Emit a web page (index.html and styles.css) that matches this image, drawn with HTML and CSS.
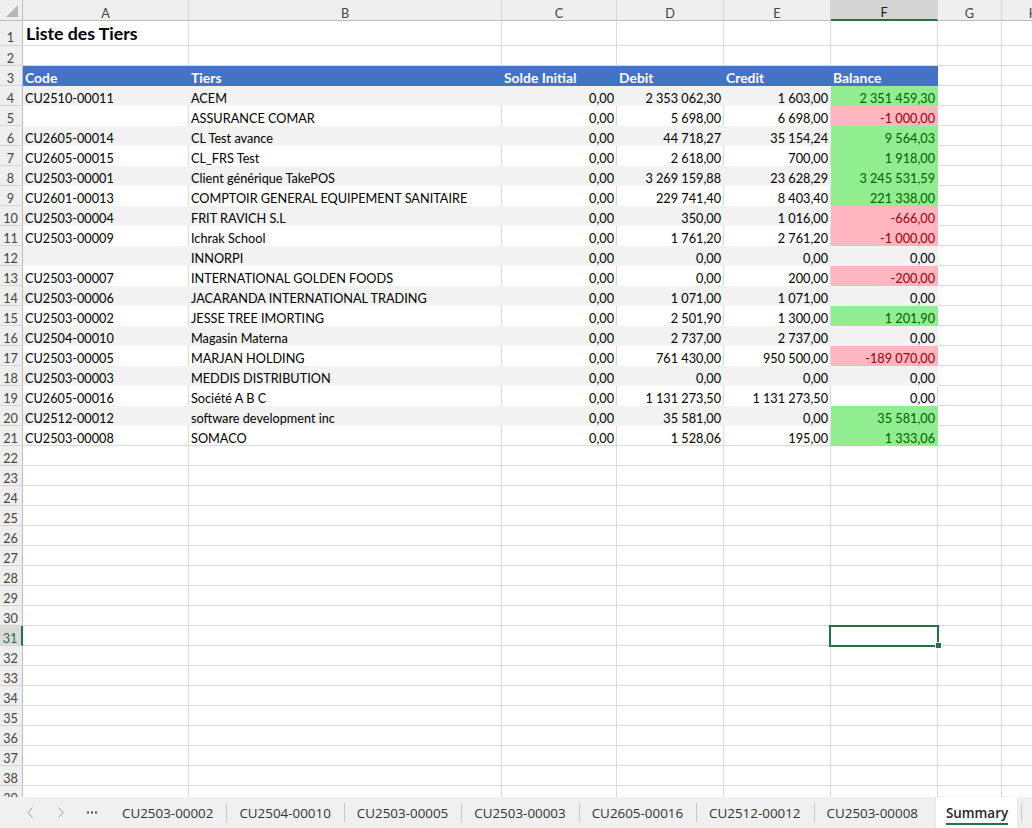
FILE: index.html
```html
<!DOCTYPE html>
<html lang="fr">
<head>
<meta charset="utf-8">
<title>Summary</title>
<link rel="stylesheet" href="styles.css">
</head>
<body>
<div class="app">
  <div class="sheet">
    <div class="row colhdr"><div class="corner"><span></span></div><div>A</div><div>B</div><div>C</div><div>D</div><div>E</div><div class="sel">F</div><div>G</div><div>H</div></div>
    <div class="row r1"><div class="rh">1</div><div class="title">Liste des Tiers</div><div></div><div></div><div></div><div></div><div></div><div></div><div></div></div>
    <div class="row"><div class="rh">2</div><div></div><div></div><div></div><div></div><div></div><div></div><div></div><div></div></div>
    <div class="row hd"><div class="rh">3</div><div class="d">Code</div><div class="d">Tiers</div><div class="d">Solde Initial</div><div class="d">Debit</div><div class="d">Credit</div><div class="d">Balance</div><div></div><div></div></div>
    <div class="row g"><div class="rh">4</div><div class="d">CU2510-00011</div><div class="d">ACEM</div><div class="d n">0,00</div><div class="d n">2&nbsp;353&nbsp;062,30</div><div class="d n">1&nbsp;603,00</div><div class="d n pos">2&nbsp;351&nbsp;459,30</div><div></div><div></div></div>
    <div class="row w"><div class="rh">5</div><div class="d"></div><div class="d">ASSURANCE COMAR</div><div class="d n">0,00</div><div class="d n">5&nbsp;698,00</div><div class="d n">6&nbsp;698,00</div><div class="d n neg">-1&nbsp;000,00</div><div></div><div></div></div>
    <div class="row g"><div class="rh">6</div><div class="d">CU2605-00014</div><div class="d">CL Test avance</div><div class="d n">0,00</div><div class="d n">44&nbsp;718,27</div><div class="d n">35&nbsp;154,24</div><div class="d n pos">9&nbsp;564,03</div><div></div><div></div></div>
    <div class="row w"><div class="rh">7</div><div class="d">CU2605-00015</div><div class="d">CL_FRS Test</div><div class="d n">0,00</div><div class="d n">2&nbsp;618,00</div><div class="d n">700,00</div><div class="d n pos">1&nbsp;918,00</div><div></div><div></div></div>
    <div class="row g"><div class="rh">8</div><div class="d">CU2503-00001</div><div class="d">Client générique TakePOS</div><div class="d n">0,00</div><div class="d n">3&nbsp;269&nbsp;159,88</div><div class="d n">23&nbsp;628,29</div><div class="d n pos">3&nbsp;245&nbsp;531,59</div><div></div><div></div></div>
    <div class="row w"><div class="rh">9</div><div class="d">CU2601-00013</div><div class="d">COMPTOIR GENERAL EQUIPEMENT SANITAIRE</div><div class="d n">0,00</div><div class="d n">229&nbsp;741,40</div><div class="d n">8&nbsp;403,40</div><div class="d n pos">221&nbsp;338,00</div><div></div><div></div></div>
    <div class="row g"><div class="rh">10</div><div class="d">CU2503-00004</div><div class="d">FRIT RAVICH S.L</div><div class="d n">0,00</div><div class="d n">350,00</div><div class="d n">1&nbsp;016,00</div><div class="d n neg">-666,00</div><div></div><div></div></div>
    <div class="row w"><div class="rh">11</div><div class="d">CU2503-00009</div><div class="d">Ichrak School</div><div class="d n">0,00</div><div class="d n">1&nbsp;761,20</div><div class="d n">2&nbsp;761,20</div><div class="d n neg">-1&nbsp;000,00</div><div></div><div></div></div>
    <div class="row g"><div class="rh">12</div><div class="d"></div><div class="d">INNORPI</div><div class="d n">0,00</div><div class="d n">0,00</div><div class="d n">0,00</div><div class="d n">0,00</div><div></div><div></div></div>
    <div class="row w"><div class="rh">13</div><div class="d">CU2503-00007</div><div class="d">INTERNATIONAL GOLDEN FOODS</div><div class="d n">0,00</div><div class="d n">0,00</div><div class="d n">200,00</div><div class="d n neg">-200,00</div><div></div><div></div></div>
    <div class="row g"><div class="rh">14</div><div class="d">CU2503-00006</div><div class="d">JACARANDA INTERNATIONAL TRADING</div><div class="d n">0,00</div><div class="d n">1&nbsp;071,00</div><div class="d n">1&nbsp;071,00</div><div class="d n">0,00</div><div></div><div></div></div>
    <div class="row w"><div class="rh">15</div><div class="d">CU2503-00002</div><div class="d">JESSE TREE IMORTING</div><div class="d n">0,00</div><div class="d n">2&nbsp;501,90</div><div class="d n">1&nbsp;300,00</div><div class="d n pos">1&nbsp;201,90</div><div></div><div></div></div>
    <div class="row g"><div class="rh">16</div><div class="d">CU2504-00010</div><div class="d">Magasin Materna</div><div class="d n">0,00</div><div class="d n">2&nbsp;737,00</div><div class="d n">2&nbsp;737,00</div><div class="d n">0,00</div><div></div><div></div></div>
    <div class="row w"><div class="rh">17</div><div class="d">CU2503-00005</div><div class="d">MARJAN HOLDING</div><div class="d n">0,00</div><div class="d n">761&nbsp;430,00</div><div class="d n">950&nbsp;500,00</div><div class="d n neg">-189&nbsp;070,00</div><div></div><div></div></div>
    <div class="row g"><div class="rh">18</div><div class="d">CU2503-00003</div><div class="d">MEDDIS DISTRIBUTION</div><div class="d n">0,00</div><div class="d n">0,00</div><div class="d n">0,00</div><div class="d n">0,00</div><div></div><div></div></div>
    <div class="row w"><div class="rh">19</div><div class="d">CU2605-00016</div><div class="d">Société A B C</div><div class="d n">0,00</div><div class="d n">1&nbsp;131&nbsp;273,50</div><div class="d n">1&nbsp;131&nbsp;273,50</div><div class="d n">0,00</div><div></div><div></div></div>
    <div class="row g"><div class="rh">20</div><div class="d">CU2512-00012</div><div class="d">software development inc</div><div class="d n">0,00</div><div class="d n">35&nbsp;581,00</div><div class="d n">0,00</div><div class="d n pos">35&nbsp;581,00</div><div></div><div></div></div>
    <div class="row w last"><div class="rh">21</div><div class="d">CU2503-00008</div><div class="d">SOMACO</div><div class="d n">0,00</div><div class="d n">1&nbsp;528,06</div><div class="d n">195,00</div><div class="d n pos">1&nbsp;333,06</div><div></div><div></div></div>
    <div class="row"><div class="rh">22</div><div></div><div></div><div></div><div></div><div></div><div></div><div></div><div></div></div>
    <div class="row"><div class="rh">23</div><div></div><div></div><div></div><div></div><div></div><div></div><div></div><div></div></div>
    <div class="row"><div class="rh">24</div><div></div><div></div><div></div><div></div><div></div><div></div><div></div><div></div></div>
    <div class="row"><div class="rh">25</div><div></div><div></div><div></div><div></div><div></div><div></div><div></div><div></div></div>
    <div class="row"><div class="rh">26</div><div></div><div></div><div></div><div></div><div></div><div></div><div></div><div></div></div>
    <div class="row"><div class="rh">27</div><div></div><div></div><div></div><div></div><div></div><div></div><div></div><div></div></div>
    <div class="row"><div class="rh">28</div><div></div><div></div><div></div><div></div><div></div><div></div><div></div><div></div></div>
    <div class="row"><div class="rh">29</div><div></div><div></div><div></div><div></div><div></div><div></div><div></div><div></div></div>
    <div class="row"><div class="rh">30</div><div></div><div></div><div></div><div></div><div></div><div></div><div></div><div></div></div>
    <div class="row"><div class="rh sel">31</div><div></div><div></div><div></div><div></div><div></div><div class="cur"></div><div></div><div></div></div>
    <div class="row"><div class="rh">32</div><div></div><div></div><div></div><div></div><div></div><div></div><div></div><div></div></div>
    <div class="row"><div class="rh">33</div><div></div><div></div><div></div><div></div><div></div><div></div><div></div><div></div></div>
    <div class="row"><div class="rh">34</div><div></div><div></div><div></div><div></div><div></div><div></div><div></div><div></div></div>
    <div class="row"><div class="rh">35</div><div></div><div></div><div></div><div></div><div></div><div></div><div></div><div></div></div>
    <div class="row"><div class="rh">36</div><div></div><div></div><div></div><div></div><div></div><div></div><div></div><div></div></div>
    <div class="row"><div class="rh">37</div><div></div><div></div><div></div><div></div><div></div><div></div><div></div><div></div></div>
    <div class="row"><div class="rh">38</div><div></div><div></div><div></div><div></div><div></div><div></div><div></div><div></div></div>
    <div class="row"><div class="rh">39</div><div></div><div></div><div></div><div></div><div></div><div></div><div></div><div></div></div>
  </div>
  <div class="tabs">
    <div class="nav">
      <span class="btn"><svg width="6" height="11" viewBox="0 0 6 11"><path d="M5.5 0.5 L0.8 5.5 L5.5 10.5" fill="none" stroke="#9d9d9d" stroke-width="1"/></svg></span>
      <span class="btn"><svg width="6" height="11" viewBox="0 0 6 11"><path d="M0.5 0.5 L5.2 5.5 L0.5 10.5" fill="none" stroke="#9d9d9d" stroke-width="1"/></svg></span>
      <span class="btn"><svg width="10" height="3" viewBox="0 0 10 3"><rect x="0" y="0.5" width="2" height="2" fill="#444"/><rect x="4" y="0.5" width="2" height="2" fill="#444"/><rect x="8" y="0.5" width="2" height="2" fill="#444"/></svg></span>
    </div>
    <div class="tab">CU2503-00002</div><i class="sep"></i>
    <div class="tab">CU2504-00010</div><i class="sep"></i>
    <div class="tab">CU2503-00005</div><i class="sep"></i>
    <div class="tab">CU2503-00003</div><i class="sep"></i>
    <div class="tab">CU2605-00016</div><i class="sep"></i>
    <div class="tab">CU2512-00012</div><i class="sep"></i>
    <div class="tab">CU2503-00008</div>
    <div class="tab active"><span class="lbl">Summary</span></div><i class="sep"></i>
  </div>
</div>
</body>
</html>
```
FILE: styles.css
```css
html, body {
  margin: 0;
  padding: 0;
  background: #ffffff;
}
body {
  width: 1032px;
  height: 828px;
  overflow: hidden;
  font-family: Lato, "Liberation Sans", sans-serif;
}
.app {
  display: flex;
  flex-direction: column;
  height: 828px;
}
.sheet {
  height: 797px;
  flex: none;
  overflow: hidden;
}
.row {
  display: grid;
  grid-template-columns: 23px 166px 313px 115px 107px 107px 107px 64px 64px;
  height: 20px;
}
.row > div {
  box-sizing: border-box;
  border-right: 1px solid #dadada;
  border-bottom: 1px solid #dadada;
  font-size: 12.7px;
  line-height: 1;
  color: #000;
  white-space: nowrap;
  overflow: hidden;
  padding: 5px 2px 0 2px;
  display: flex;
  align-items: center;
}
.row > .rh {
  background: #efefef;
  border-right-color: #bcbcbc;
  border-bottom-color: #d6d6d6;
  justify-content: center;
  color: #444;
  padding: 5px 1px 0 0;
}
.colhdr {
  height: 21px;
}
.colhdr > div {
  background: #efefef;
  justify-content: center;
  color: #444;
}
.row.colhdr > div {
  padding-top: 6px;
  border-bottom-color: #bcbcbc;
  border-right-color: #d6d6d6;
}
.row.colhdr > .corner {
  border-right-color: #bcbcbc;
  justify-content: flex-end;
  align-items: flex-end;
  padding: 0 4px 3px 0;
}
.corner span {
  width: 12px;
  height: 12px;
  background: #b6b6b6;
  clip-path: polygon(100% 0, 100% 100%, 0 100%);
}
.row.colhdr > .sel {
  background: #d4d4d4;
  border-bottom: 2px solid #217346;
  color: #222;
}
.r1 {
  height: 25px;
}
.row.r1 > div {
  align-items: flex-end;
  padding-top: 0;
  padding-bottom: 2px;
}
.row.r1 > .rh {
  align-items: flex-end;
  padding-bottom: 1px;
}
.row.r1 > .title {
  font-weight: 700;
  font-size: 17.7px;
  padding-left: 3px;
  padding-bottom: 2px;
  overflow: visible;
}
.row.hd > .d {
  background: #4472c4;
  border-color: #4472c4;
  color: #fff;
  font-weight: 700;
  font-size: 13.9px;
  padding-top: 4px;
}
.g > .d {
  background: #f2f2f2;
  border-color: #f2f2f2;
}
.w > .d {
  border-bottom-color: #ffffff;
}
.w.last > .d {
  border-bottom-color: #dadada;
}
.row > .d.n {
  justify-content: flex-end;
}
.row > .d.pos {
  background: #90ee90;
  border-color: #90ee90;
  color: #006100;
}
.row > .d.neg {
  background: #ffb6c1;
  border-color: #ffb6c1;
  color: #9c0006;
}
.row > .rh.sel {
  background: #dadada;
  border-right: 2px solid #217346;
  color: #217346;
}
.row > .cur {
  position: relative;
  overflow: visible;
}
.cur::after {
  content: "";
  position: absolute;
  left: -2px;
  top: -1px;
  width: 110px;
  height: 22px;
  box-sizing: border-box;
  border: 2px solid #217346;
}
.cur::before {
  content: "";
  position: absolute;
  left: 104px;
  top: 16px;
  width: 7px;
  height: 7px;
  box-sizing: border-box;
  background: #217346;
  border: 1px solid #ffffff;
  z-index: 2;
}
.tabs {
  height: 31px;
  flex: none;
  background: #f0f0f0;
  display: flex;
  align-items: stretch;
  font-family: "Open Sans", "Noto Sans", sans-serif;
  font-size: 13.4px;
  color: #333;
}
.nav {
  width: 110px;
  flex: none;
  box-sizing: border-box;
  padding-left: 14px;
  display: flex;
  align-items: center;
}
.btn {
  width: 31px;
  display: flex;
  justify-content: center;
  align-items: center;
}
.tab {
  display: flex;
  align-items: center;
  padding: 0 13px 0 12px;
  white-space: nowrap;
}
.sep {
  width: 1px;
  height: 19px;
  align-self: center;
  background: #c9c9c9;
}
.tab.active {
  background: #ffffff;
  font-weight: 600;
  color: #262626;
  padding: 0 9px 0 10px;
  margin-left: 5px;
  margin-right: 4px;
  box-shadow: 0 0 2px rgba(0,0,0,0.12);
}
.lbl {
  padding: 4px 0 1px;
  border-bottom: 2px solid #217346;
}
```
